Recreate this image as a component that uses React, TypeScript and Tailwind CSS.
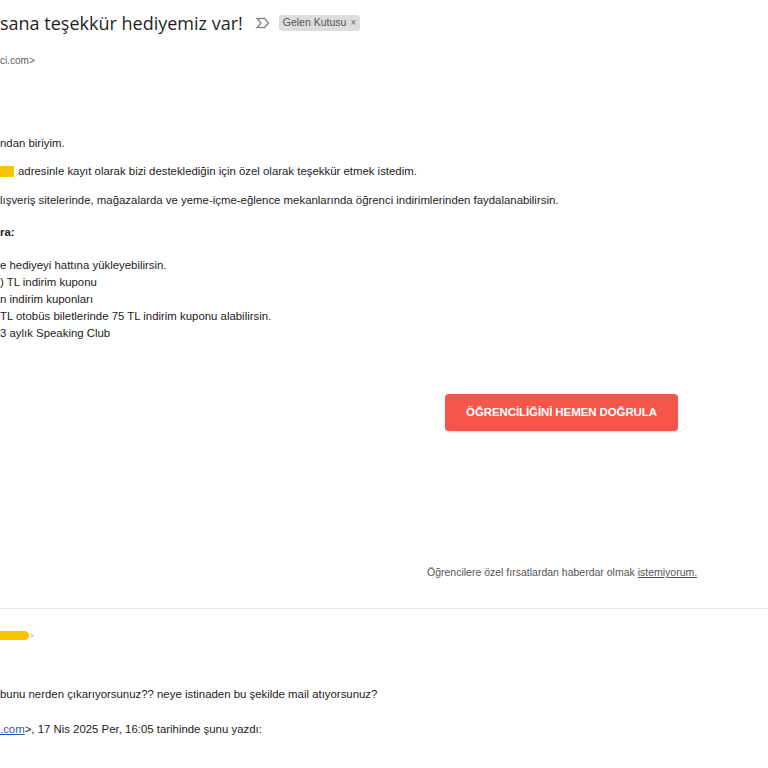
import React from "react";

const body = { fontFamily: '"Liberation Sans", Arial, sans-serif' };

export default function App() {
  return (
    <div className="w-[768px] h-[768px] overflow-hidden bg-white text-[#222222]" style={body}>
      {/* Subject line */}
      <div className="flex items-center h-[44px] pt-[1px]">
        <h1 className="text-[18px] leading-none text-[#1f1f1f] whitespace-nowrap" style={{ fontFamily: '"Open Sans", Roboto, sans-serif' }}>
          sana teşekkür hediyemiz var!
        </h1>
        <svg width="14" height="12" viewBox="0 0 14 12" className="ml-[13px] mt-[1px]" fill="none" stroke="#8a8a8a" strokeWidth="1.4">
          <path d="M1 1.5h7.5l4 4.5-4 4.5H1l4-4.5z" />
        </svg>
        <span className="ml-[9px] flex items-center h-[16px] px-[4px] rounded-[3px] bg-[#dddddd] text-[10.5px] text-[#555] whitespace-nowrap">
          Gelen Kutusu <span className="ml-[4px] text-[10px] text-[#666]">×</span>
        </span>
      </div>

      <div className="h-[32px] flex items-center text-[10px] text-[#5e5e5e]">ci.com&gt;</div>

      {/* Mail body */}
      <div className="pt-[59px] text-[11.4px] leading-[17px]">
        <p>ndan biriyim.</p>
        <p className="mt-[11px] flex items-center">
          <span className="inline-block w-[14px] h-[11px] bg-[#f6c500] mr-[4px] rounded-[1px]" />
          adresinle kayıt olarak bizi desteklediğin için özel olarak teşekkür etmek istedim.
        </p>
        <p className="mt-[12px]">lışveriş sitelerinde, mağazalarda ve yeme-içme-eğlence mekanlarında öğrenci indirimlerinden faydalanabilirsin.</p>
        <p className="mt-[15px] font-bold">ra:</p>
        <div className="mt-[16px]">
          <p>e hediyeyi hattına yükleyebilirsin.</p>
          <p>) TL indirim kuponu</p>
          <p>n indirim kuponları</p>
          <p>TL otobüs biletlerinde 75 TL indirim kuponu alabilirsin.</p>
          <p>3 aylık Speaking Club</p>
        </div>
      </div>

      {/* CTA */}
      <div className="pt-[52px] pl-[445px]">
        <div className="w-[233px] h-[37px] rounded-[4px] bg-[#f5564c] flex items-center justify-center text-white text-[11.5px] font-bold tracking-[-0.1px] shadow-[0_1px_2px_rgba(0,0,0,0.15)]">
          ÖĞRENCİLİĞİNİ HEMEN DOĞRULA
        </div>
      </div>

      <div className="pt-[134px] pl-[427px] text-[10.5px] text-[#555]">
        Öğrencilere özel fırsatlardan haberdar olmak <span className="underline">istemiyorum.</span>
      </div>

      <div className="mt-[27px] border-t border-[#e8e8e8]" />

      {/* Reply */}
      <div className="pt-[22px] flex items-center h-[32px]">
        <span className="inline-block w-[29px] h-[9px] bg-[#f8c200] rounded-r-full" />
        <span className="text-[8px] text-[#999]">&gt;</span>
      </div>

      <p className="mt-[45px] text-[11.4px] leading-[17px]">bunu nerden çıkarıyorsunuz?? neye istinaden bu şekilde mail atıyorsunuz?</p>
      <p className="mt-[18px] text-[11.4px] leading-[17px]">
        <span className="text-[#1a5fb4] underline">.com</span>&gt;, 17 Nis 2025 Per, 16:05 tarihinde şunu yazdı:
      </p>
    </div>
  );
}
